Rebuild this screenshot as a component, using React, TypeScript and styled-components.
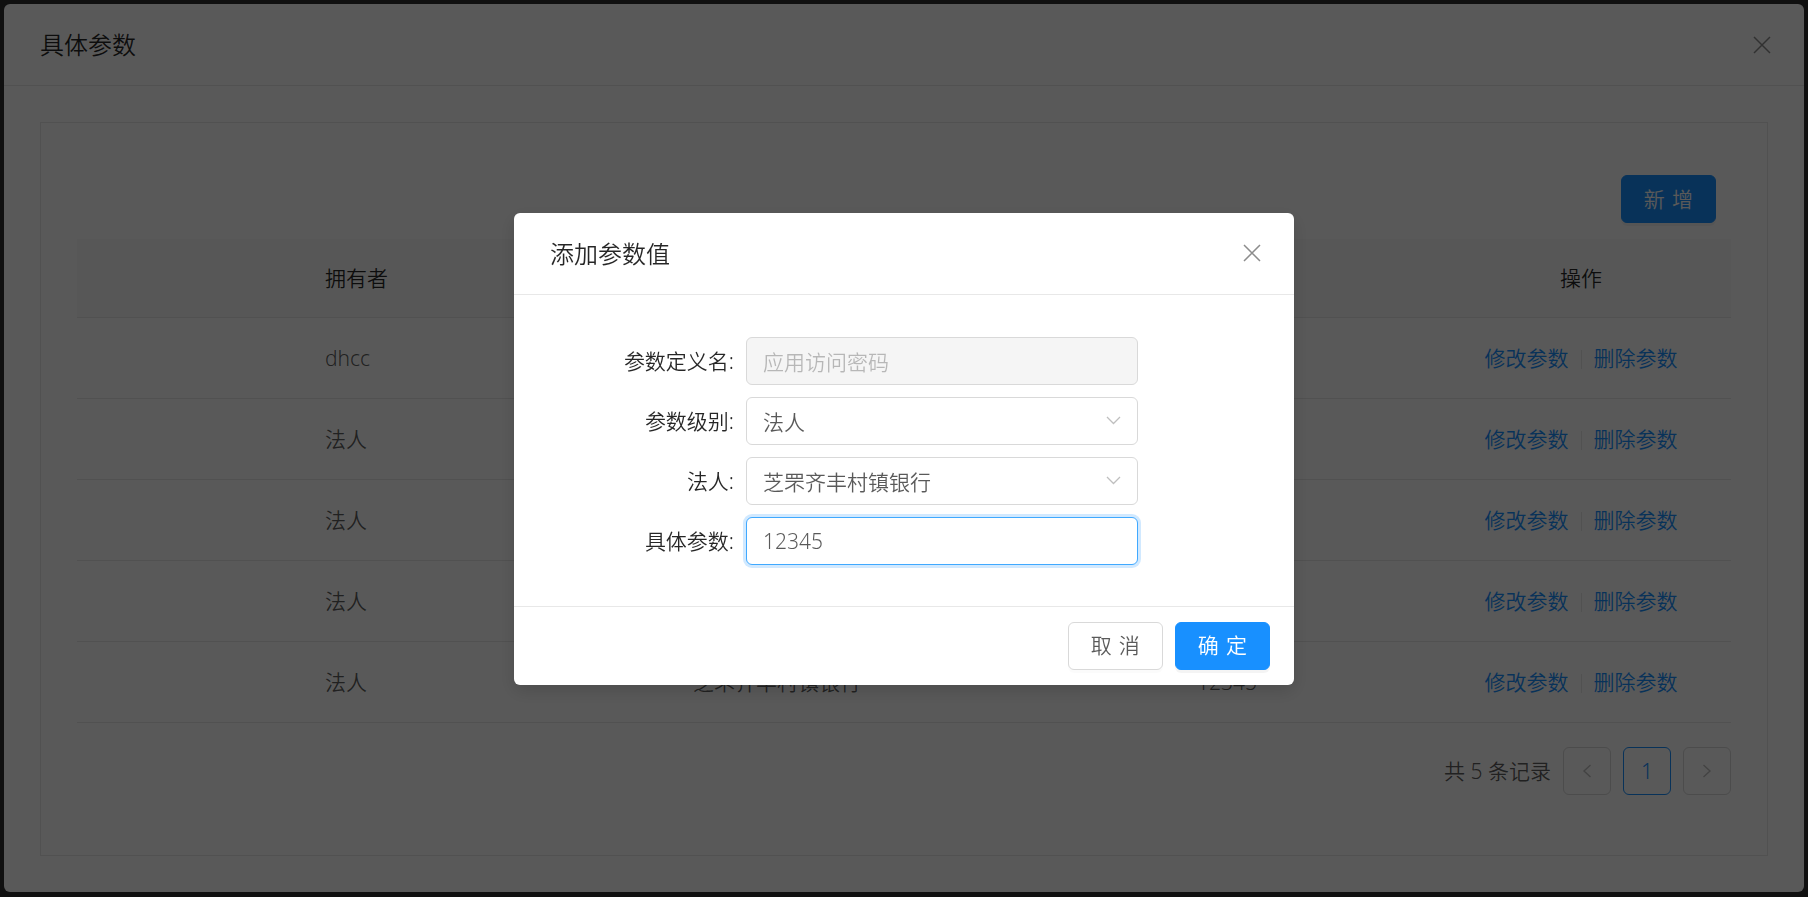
import React from 'react';
import styled, { createGlobalStyle, css } from 'styled-components';

const GlobalStyle = createGlobalStyle`
  html, body { margin: 0; padding: 0; }
  body {
    background: #2e2e2e;
    font-family: "Noto Sans", "Noto Sans CJK SC", sans-serif;
    font-size: 21px;
    font-weight: 350;
    color: rgba(0, 0, 0, 0.65);
    overflow: hidden;
  }
  * { box-sizing: border-box; }
`;

const Page = styled.div`
  padding: 4px;
  height: 897px;
`;

const Panel = styled.section`
  width: 1800px;
  background: #fff;
  border-radius: 6px;
`;

const Header = styled.header`
  display: flex;
  align-items: center;
  height: 82px;
  padding-left: 36px;
  border-bottom: 1px solid #e8e8e8;
`;

const Title = styled.h2`
  flex: 1;
  margin: 0;
  font-size: 24px;
  line-height: 33px;
  font-weight: 350;
  color: rgba(0, 0, 0, 0.85);
`;

const CloseButton = styled.button`
  width: 84px;
  height: 81px;
  border: 0;
  padding: 0;
  background: transparent;
  display: flex;
  align-items: center;
  justify-content: center;
  color: rgba(0, 0, 0, 0.45);
  cursor: pointer;
`;

const PanelBody = styled.div`
  padding: 36px;
`;

const Box = styled.div`
  border: 1px solid #e8e8e8;
  padding: 36px;
`;

const Toolbar = styled.div`
  display: flex;
  justify-content: flex-end;
  padding: 16px 15px 0 0;
  margin-bottom: 16px;
`;

const Button = styled.button<{ $primary?: boolean }>`
  height: 48px;
  padding: 0 22px;
  font-family: inherit;
  font-size: 21px;
  font-weight: 350;
  line-height: 1;
  white-space: nowrap;
  border-radius: 6px;
  border: 1px solid #d9d9d9;
  background: #fff;
  color: rgba(0, 0, 0, 0.65);
  box-shadow: 0 3px 0 rgba(0, 0, 0, 0.015);
  cursor: pointer;
  span {
    display: inline-block;
    white-space: nowrap;
    letter-spacing: 0.34em;
    margin-right: -0.34em;
  }
  ${(p) =>
    p.$primary &&
    css`
      background: #1890ff;
      border-color: #1890ff;
      color: #fff;
      box-shadow: 0 3px 0 rgba(0, 0, 0, 0.045);
    `}
`;

const COLS = '224px 368px 504px 258px 300px';

const TableHead = styled.div`
  display: grid;
  grid-template-columns: ${COLS};
  background: #fafafa;
  border-bottom: 1px solid #e8e8e8;
  color: rgba(0, 0, 0, 0.85);
`;

const TableRow = styled.div`
  display: grid;
  grid-template-columns: ${COLS};
  border-bottom: 1px solid #e8e8e8;
`;

const Cell = styled.div<{ $head?: boolean; $center?: boolean }>`
  padding: ${(p) => (p.$head ? '23px 24px' : '24px 24px')};
  line-height: 32px;
  white-space: nowrap;
  text-align: ${(p) => (p.$center ? 'center' : 'left')};
`;

const Link = styled.a`
  color: #1890ff;
  text-decoration: none;
  cursor: pointer;
`;

const Divider = styled.span`
  display: inline-block;
  width: 1px;
  height: 0.9em;
  margin: 0 12px;
  vertical-align: middle;
  background: #e8e8e8;
  position: relative;
  top: -1px;
`;

const Pagination = styled.div`
  display: flex;
  justify-content: flex-end;
  align-items: center;
  gap: 12px;
  margin: 24px 0;
`;

const Total = styled.span`
  line-height: 48px;
  color: rgba(0, 0, 0, 0.65);
`;

const PageItem = styled.div<{ $active?: boolean }>`
  width: 48px;
  height: 48px;
  border: 1px solid ${(p) => (p.$active ? '#1890ff' : '#d9d9d9')};
  border-radius: 6px;
  display: flex;
  align-items: center;
  justify-content: center;
  color: ${(p) => (p.$active ? '#1890ff' : 'rgba(0,0,0,0.25)')};
  font-size: 21px;
  background: #fff;
`;

const Mask = styled.div`
  position: fixed;
  inset: 0;
  background: rgba(0, 0, 0, 0.65);
`;

const ModalWrap = styled.div`
  position: fixed;
  inset: 0;
  display: flex;
  align-items: center;
  justify-content: center;
`;

const Dialog = styled.div`
  width: 780px;
  background: #fff;
  border-radius: 6px;
  box-shadow: 0 6px 18px rgba(0, 0, 0, 0.15);
`;

const DialogBody = styled.div`
  padding: 42px 36px 41px;
  display: flex;
  flex-direction: column;
  gap: 12px;
`;

const FormItem = styled.div`
  display: grid;
  grid-template-columns: 196px 392px;
  align-items: center;
`;

const Label = styled.label`
  text-align: right;
  padding-right: 12px;
  line-height: 48px;
  color: rgba(0, 0, 0, 0.85);
  white-space: nowrap;
`;

const Field = styled.div<{ $disabled?: boolean; $focused?: boolean }>`
  height: 48px;
  display: flex;
  align-items: center;
  padding: 0 16px;
  border: 1px solid #d9d9d9;
  border-radius: 6px;
  background: #fff;
  color: rgba(0, 0, 0, 0.65);
  ${(p) =>
    p.$disabled &&
    css`
      background: #f5f5f5;
      color: rgba(0, 0, 0, 0.25);
    `}
  ${(p) =>
    p.$focused &&
    css`
      border-color: #40a9ff;
      box-shadow: 0 0 0 3px rgba(24, 144, 255, 0.2);
    `}
`;

const FieldValue = styled.span`
  flex: 1;
  white-space: nowrap;
`;

const Footer = styled.div`
  display: flex;
  justify-content: flex-end;
  gap: 12px;
  padding: 15px 24px;
  border-top: 1px solid #e8e8e8;
`;

const CloseIcon = () => (
  <svg width="18" height="18" viewBox="0 0 18 18" fill="none">
    <path d="M1 1 L17 17 M17 1 L1 17" stroke="currentColor" strokeWidth="1.5" />
  </svg>
);

const ChevronDown = () => (
  <svg width="15" height="9" viewBox="0 0 15 9" fill="none">
    <path d="M1 1 L7.5 7.5 L14 1" stroke="#bfbfbf" strokeWidth="1.3" />
  </svg>
);

const Chevron = ({ dir }: { dir: 'left' | 'right' }) => (
  <svg width="10" height="14" viewBox="0 0 10 14" fill="none">
    <path
      d={dir === 'left' ? 'M8.5 1 L2 7 L8.5 13' : 'M1.5 1 L8 7 L1.5 13'}
      stroke="currentColor"
      strokeWidth="1.4"
    />
  </svg>
);

const rows = [
  { owner: 'dhcc', corp: '', value: '12345' },
  { owner: '法人', corp: '芝罘齐丰村镇银行', value: '12345' },
  { owner: '法人', corp: '芝罘齐丰村镇银行', value: '12345' },
  { owner: '法人', corp: '芝罘齐丰村镇银行', value: '12345' },
  { owner: '法人', corp: '芝罘齐丰村镇银行', value: '12345' },
];

export default function App() {
  return (
    <>
      <GlobalStyle />
      <Page>
        <Panel>
          <Header>
            <Title>具体参数</Title>
            <CloseButton aria-label="close">
              <CloseIcon />
            </CloseButton>
          </Header>
          <PanelBody>
            <Box>
              <Toolbar>
                <Button $primary>
                  <span>新增</span>
                </Button>
              </Toolbar>
              <TableHead>
                <Cell $head />
                <Cell $head>拥有者</Cell>
                <Cell $head>法人</Cell>
                <Cell $head>具体参数</Cell>
                <Cell $head $center>
                  操作
                </Cell>
              </TableHead>
              {rows.map((r, i) => (
                <TableRow key={i}>
                  <Cell />
                  <Cell>{r.owner}</Cell>
                  <Cell>{r.corp}</Cell>
                  <Cell>{r.value}</Cell>
                  <Cell $center>
                    <Link>修改参数</Link>
                    <Divider />
                    <Link>删除参数</Link>
                  </Cell>
                </TableRow>
              ))}
              <Pagination>
                <Total>共 5 条记录</Total>
                <PageItem>
                  <Chevron dir="left" />
                </PageItem>
                <PageItem $active>1</PageItem>
                <PageItem>
                  <Chevron dir="right" />
                </PageItem>
              </Pagination>
            </Box>
          </PanelBody>
        </Panel>
      </Page>
      <Mask />
      <ModalWrap>
        <Dialog>
          <Header>
            <Title>添加参数值</Title>
            <CloseButton aria-label="close">
              <CloseIcon />
            </CloseButton>
          </Header>
          <DialogBody>
            <FormItem>
              <Label>参数定义名:</Label>
              <Field $disabled>
                <FieldValue>应用访问密码</FieldValue>
              </Field>
            </FormItem>
            <FormItem>
              <Label>参数级别:</Label>
              <Field>
                <FieldValue>法人</FieldValue>
                <ChevronDown />
              </Field>
            </FormItem>
            <FormItem>
              <Label>法人:</Label>
              <Field>
                <FieldValue>芝罘齐丰村镇银行</FieldValue>
                <ChevronDown />
              </Field>
            </FormItem>
            <FormItem>
              <Label>具体参数:</Label>
              <Field $focused>
                <FieldValue>12345</FieldValue>
              </Field>
            </FormItem>
          </DialogBody>
          <Footer>
            <Button>
              <span>取消</span>
            </Button>
            <Button $primary>
              <span>确定</span>
            </Button>
          </Footer>
        </Dialog>
      </ModalWrap>
    </>
  );
}
